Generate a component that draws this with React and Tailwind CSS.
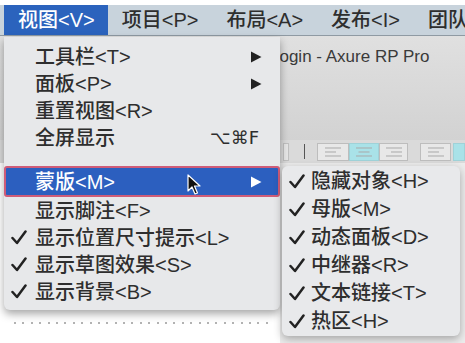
import React from 'react';

const FONT = { fontFamily: '"Liberation Sans", "Noto Sans CJK SC", sans-serif' };

function Check() {
  return (
    <svg width="16" height="15" viewBox="0 0 16 15" className="shrink-0">
      <path d="M1.5 8 L6 13 L14.5 1.5" fill="none" stroke="#222" strokeWidth="2.5" strokeLinecap="round" strokeLinejoin="round" />
    </svg>
  );
}

function Arrow({ color = '#222' }) {
  return (
    <svg width="12" height="12" viewBox="0 0 12 12">
      <polygon points="1,0.5 11.5,6 1,11.5" fill={color} />
    </svg>
  );
}

function Cursor() {
  return (
    <svg width="14" height="22" viewBox="0 0 14 22">
      <path d="M1 1 L1 17 L5 13 L8 20 L10.5 19 L7.5 12 L13 12 Z" fill="#111" stroke="#fff" strokeWidth="1.2" strokeLinejoin="round" />
    </svg>
  );
}

function AlignIcon({ align }) {
  const rows = [3, 7, 11];
  const widths = [16, 11, 16];
  return (
    <svg width="20" height="14" viewBox="0 0 20 14">
      {rows.map((y, i) => {
        const w = widths[i];
        const x = align === 'left' ? 2 : align === 'right' ? 18 - w : (20 - w) / 2;
        return <line key={y} x1={x} x2={x + w} y1={y} y2={y} stroke="#a9a9a9" strokeWidth="1" />;
      })}
    </svg>
  );
}

function MenuItem({ checked, children, right }) {
  return (
    <div className="relative flex h-[27px] items-center pl-[31px] pr-[18px]">
      {checked && (
        <span className="absolute left-[7px] top-[6px]">
          <Check />
        </span>
      )}
      <span className="flex-1 whitespace-nowrap">{children}</span>
      {right}
    </div>
  );
}

export default function App() {
  const menus = ['项目<P>', '布局<A>', '发布<I>', '团队'];
  const sub = ['隐藏对象<H>', '母版<M>', '动态面板<D>', '中继器<R>', '文本链接<T>', '热区<H>'];

  return (
    <div className="relative h-[343px] w-[465px] overflow-hidden bg-white text-[20px] font-medium text-[#2e2e2e]" style={FONT}>
      {/* menu bar */}
      <div className="mt-[5px] flex h-[31px] items-center overflow-hidden border-b border-[#8f9aa3] bg-[#c8d3dc] leading-none">
        <div className="ml-[4px] flex h-full shrink-0 items-center whitespace-nowrap bg-[#2b63bd] pl-[14px] pr-[13px] text-white">视图&lt;V&gt;</div>
        {menus.map((m) => (
          <div key={m} className="shrink-0 whitespace-nowrap px-[14px]">
            {m}
          </div>
        ))}
      </div>

      {/* window behind */}
      <div className="flex h-[104px] items-start bg-gradient-to-b from-[#e0e0e0] to-[#d2d2d2] pl-[270px] pt-[10px]">
        <span className="whitespace-nowrap text-[17px] font-normal leading-[22px] text-[#3a3a3a]">Login - Axure RP Pro</span>
      </div>
      <div className="flex h-[23px] items-center bg-[#dadada] pl-[283px]">
        <div className="h-[18px] w-[8px] border border-[#c0c0c0] bg-[#e6e6e6]" />
        <div className="ml-[15px] h-[15px] w-px bg-[#555]" />
        <div className="ml-[12px] flex">
          <div className="flex h-[18px] w-[32px] items-center justify-center border border-[#bdbdbd] bg-[#e8e8e8]"><AlignIcon align="left" /></div>
          <div className="flex h-[18px] w-[30px] items-center justify-center border border-[#9fd2d8] bg-[#a9e2e8]"><AlignIcon align="center" /></div>
          <div className="flex h-[18px] w-[29px] items-center justify-center border border-[#bdbdbd] bg-[#e8e8e8]"><AlignIcon align="right" /></div>
        </div>
        <div className="ml-[12px] flex">
          <div className="flex h-[18px] w-[31px] items-center justify-center border border-[#bdbdbd] bg-[#e8e8e8]"><AlignIcon align="left" /></div>
          <div className="ml-[2px] h-[18px] w-[12px] border border-[#9fd2d8] bg-[#a9e2e8]" />
        </div>
      </div>
      <div className="relative h-[180px] bg-[#ececec]">
        <div className="flex h-[180px] w-[280px] items-end bg-white pb-[19px] pl-[14px]">
          <div className="flex gap-[6.4px]">
            {Array.from({ length: 31 }).map((_, i) => (
              <span key={i} className="h-[2px] w-[2px] rounded-full bg-[#9a9a9a]" />
            ))}
          </div>
        </div>
      </div>

      {/* dropdown */}
      <div className="absolute left-[4px] top-[37px] w-[276px] rounded-b-[6px] bg-[#e7e8ea] pb-[5px] pt-[6px] leading-none shadow-[0_4px_8px_rgba(0,0,0,0.35)]">
        <MenuItem right={<Arrow />}>工具栏&lt;T&gt;</MenuItem>
        <MenuItem right={<Arrow />}>面板&lt;P&gt;</MenuItem>
        <MenuItem>重置视图&lt;R&gt;</MenuItem>
        <MenuItem right={<span className="pr-[3px] text-[18px]" style={{ fontFamily: '"DejaVu Sans", sans-serif' }}>⌥⌘F</span>}>全屏显示</MenuItem>
        <div className="h-[15px]" />
        <div className="relative flex h-[31px] items-center rounded-[3px] border-2 border-[#cf5c78] bg-[#2c5fbf] pl-[29px] pr-[16px] text-white">
          <span className="flex-1">蒙版&lt;M&gt;</span>
          <Arrow color="#fff" />
          <span className="absolute left-[181px] top-[6px]">
            <Cursor />
          </span>
        </div>
        <MenuItem>显示脚注&lt;F&gt;</MenuItem>
        <MenuItem checked>显示位置尺寸提示&lt;L&gt;</MenuItem>
        <MenuItem checked>显示草图效果&lt;S&gt;</MenuItem>
        <MenuItem checked>显示背景&lt;B&gt;</MenuItem>
      </div>

      {/* submenu */}
      <div className="absolute left-[282px] top-[166px] w-[178px] rounded-[6px] bg-[#e8e9eb] py-px leading-none shadow-[0_3px_8px_rgba(0,0,0,0.3)]">
        {sub.map((s) => (
          <div key={s} className="flex h-[28px] items-center gap-[6px] pl-[7px]">
            <Check />
            <span className="whitespace-nowrap">{s}</span>
          </div>
        ))}
      </div>
    </div>
  );
}
